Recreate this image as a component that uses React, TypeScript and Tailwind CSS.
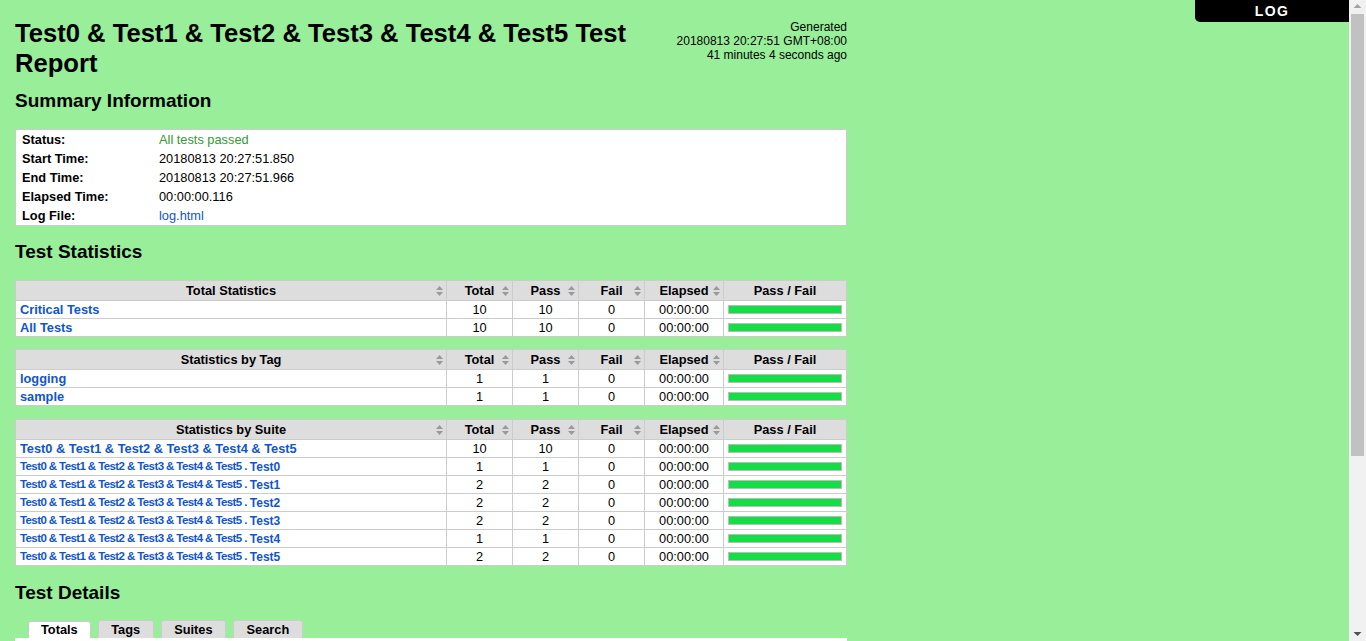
import React from "react";

type StatRow = {
  name: string;
  parent?: string;
  total: number;
  pass: number;
  fail: number;
};

const totalStats: StatRow[] = [
  { name: "Critical Tests", total: 10, pass: 10, fail: 0 },
  { name: "All Tests", total: 10, pass: 10, fail: 0 },
];

const tagStats: StatRow[] = [
  { name: "logging", total: 1, pass: 1, fail: 0 },
  { name: "sample", total: 1, pass: 1, fail: 0 },
];

const suiteParent = "Test0 & Test1 & Test2 & Test3 & Test4 & Test5";

const suiteStats: StatRow[] = [
  { name: suiteParent, total: 10, pass: 10, fail: 0 },
  { name: "Test0", parent: suiteParent, total: 1, pass: 1, fail: 0 },
  { name: "Test1", parent: suiteParent, total: 2, pass: 2, fail: 0 },
  { name: "Test2", parent: suiteParent, total: 2, pass: 2, fail: 0 },
  { name: "Test3", parent: suiteParent, total: 2, pass: 2, fail: 0 },
  { name: "Test4", parent: suiteParent, total: 1, pass: 1, fail: 0 },
  { name: "Test5", parent: suiteParent, total: 2, pass: 2, fail: 0 },
];

function SortIcon() {
  return (
    <svg width="7" height="10" viewBox="0 0 7 10" className="shrink-0">
      <polygon points="3.5,0 7,4 0,4" fill="#999" />
      <polygon points="0,6 7,6 3.5,10" fill="#999" />
    </svg>
  );
}

function HeadCell({ label, className }: { label: string; className: string }) {
  return (
    <div className={`flex items-center border-r border-[#ccc] pr-[3px] ${className}`}>
      <span className="w-[10px] shrink-0" />
      <span className="flex-1 text-center font-bold">{label}</span>
      <SortIcon />
    </div>
  );
}

function StatTable({ title, rows }: { title: string; rows: StatRow[] }) {
  return (
    <div className="w-[832px] border border-[#ccc] bg-white text-[12.8px]">
      <div className="flex h-[19px] bg-[#ddd]">
        <HeadCell label={title} className="w-[431px]" />
        <HeadCell label="Total" className="w-[66px]" />
        <HeadCell label="Pass" className="w-[66px]" />
        <HeadCell label="Fail" className="w-[66px]" />
        <HeadCell label="Elapsed" className="w-[79px]" />
        <div className="flex w-[122px] items-center justify-center font-bold">Pass / Fail</div>
      </div>
      {rows.map((row) => (
        <div key={(row.parent ?? "") + row.name} className="flex h-[18px] border-t border-[#ccc]">
          <div className="flex w-[431px] items-center border-r border-[#ccc] pl-1 font-bold text-[#1155cc]">
            {row.parent ? (
              <>
                <span className="text-[11.5px] tracking-[-0.6px]">{row.parent} . </span>
                <span className="ml-[3px] text-[12px]">{row.name}</span>
              </>
            ) : (
              <span>{row.name}</span>
            )}
          </div>
          <div className="flex w-[66px] items-center justify-center border-r border-[#ccc]">{row.total}</div>
          <div className="flex w-[66px] items-center justify-center border-r border-[#ccc]">{row.pass}</div>
          <div className="flex w-[66px] items-center justify-center border-r border-[#ccc]">{row.fail}</div>
          <div className="flex w-[79px] items-center justify-center border-r border-[#ccc]">00:00:00</div>
          <div className="flex w-[122px] items-center px-1">
            <div className="h-[9px] w-full border border-[#bbb] bg-[#15dd45]" />
          </div>
        </div>
      ))}
    </div>
  );
}

const summary: [string, React.ReactNode][] = [
  ["Status:", <span className="text-[#339933]">All tests passed</span>],
  ["Start Time:", "20180813 20:27:51.850"],
  ["End Time:", "20180813 20:27:51.966"],
  ["Elapsed Time:", "00:00:00.116"],
  ["Log File:", <span className="text-[#1155cc]">log.html</span>],
];

const tabs = ["Totals", "Tags", "Suites", "Search"];

// the reference shows the window's own scrollbar; headless hides it, so draw one
function Scrollbar() {
  return (
    <div className="fixed right-0 top-0 flex h-screen w-[17px] flex-col items-center bg-[#f1f1f1]">
      <svg width="9" height="14" viewBox="0 0 9 14" className="shrink-0">
        <polygon points="4.5,4 8.5,8 0.5,8" fill="#a3a3a3" />
      </svg>
      <div className="h-[442px] w-[13px] bg-[#c1c1c1]" />
      <div className="flex-1" />
      <svg width="9" height="14" viewBox="0 0 9 14" className="shrink-0">
        <polygon points="0.5,5 8.5,5 4.5,9" fill="#505050" />
      </svg>
    </div>
  );
}

export default function App() {
  return (
    <div className="min-h-screen bg-[#99ee99] font-['Liberation_Sans',Arial,sans-serif] text-black">
      <div className="fixed right-[17px] top-0 flex h-[22px] w-[154px] items-center justify-center rounded-bl-[5px] bg-black text-[14px] font-bold tracking-[1.4px] text-white">
        LOG
      </div>
      <Scrollbar />

      <div className="w-[847px] pl-[15px] pb-[22px]">
        <div className="flex justify-between pt-[18px]">
          <h1 className="w-[640px] text-[25.6px] font-bold leading-[30px]">
            Test0 &amp; Test1 &amp; Test2 &amp; Test3 &amp; Test4 &amp; Test5 Test Report
          </h1>
          <div className="pt-[2px] text-right text-[12px] leading-[14px]">
            <div>Generated</div>
            <div>20180813 20:27:51 GMT+08:00</div>
            <div>41 minutes 4 seconds ago</div>
          </div>
        </div>

        <h2 className="mt-[12px] text-[19px] font-bold leading-[22px]">Summary Information</h2>
        <div className="mt-[17px] w-[832px] border border-[#ccc] bg-white text-[12.8px]">
          {summary.map(([label, value]) => (
            <div key={label} className="flex h-[19px] items-center">
              <div className="w-[137px] pl-[6px] font-bold">{label}</div>
              <div className="pl-[6px]">{value}</div>
            </div>
          ))}
        </div>

        <h2 className="mt-[15px] text-[19px] font-bold leading-[22px]">Test Statistics</h2>
        <div className="mt-[17px]">
          <StatTable title="Total Statistics" rows={totalStats} />
        </div>
        <div className="mt-[12px]">
          <StatTable title="Statistics by Tag" rows={tagStats} />
        </div>
        <div className="mt-[13px]">
          <StatTable title="Statistics by Suite" rows={suiteStats} />
        </div>

        <h2 className="mt-[16px] text-[19px] font-bold leading-[22px]">Test Details</h2>
        <div className="mt-[16px] flex gap-[7px] pl-[13px]">
          {tabs.map((tab, i) => (
            <div
              key={tab}
              className={
                i === 0
                  ? "mt-px flex h-[17px] items-center rounded-t-[3px] border border-b-0 border-[#ccc] bg-white px-3 text-[12.8px] font-bold"
                  : "flex h-[18px] items-center rounded-t-[3px] border border-b-0 border-[#ccc] bg-[#ddd] px-[12.5px] text-[12.8px] font-bold"
              }
            >
              {tab}
            </div>
          ))}
        </div>
        <div className="h-[220px] w-[832px] bg-white" />
      </div>
    </div>
  );
}
